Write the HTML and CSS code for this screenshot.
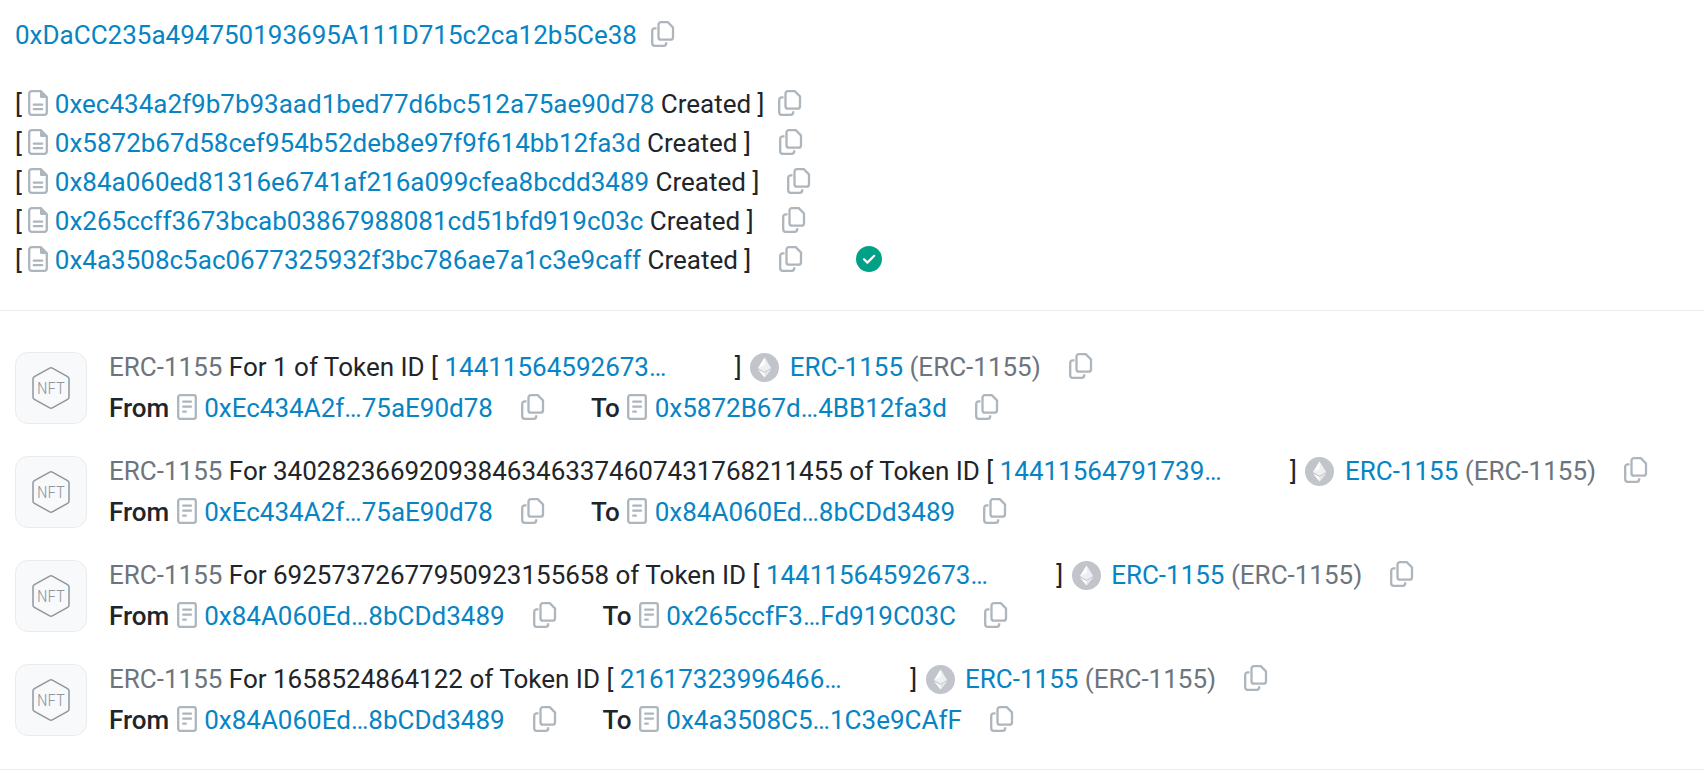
FILE: index.html
```
<!DOCTYPE html>
<html lang="en">
<head>
<meta charset="utf-8">
<title>Transaction details</title>
<link rel="stylesheet" href="styles.css">
</head>
<body>
<svg class="defs" aria-hidden="true">
  <symbol id="copy" viewBox="0 0 24 26"><path d="M10 1.200h6.800l5.200 5.200v9.800a2.500 2.500 0 0 1-2.500 2.500H10a2.500 2.500 0 0 1-2.500-2.500V3.700a2.500 2.500 0 0 1 2.500-2.500zM5.500 7.300H3.700A2.500 2.500 0 0 0 1.200 9.800v12.500a2.500 2.500 0 0 0 2.500 2.500h9a2.500 2.500 0 0 0 2.500-2.500v-1" fill="none" stroke="currentColor" stroke-width="2.300"/></symbol>
  <symbol id="file" viewBox="0 0 20 26"><path d="M3.700 1.200h9.100l6 6v15.100a2.500 2.500 0 0 1-2.500 2.500H3.700a2.500 2.500 0 0 1-2.500-2.500V3.700a2.500 2.500 0 0 1 2.500-2.500zM5.800 14.700h8.400M5.800 19.200h8.400" fill="none" stroke="currentColor" stroke-width="2.300" stroke-linecap="round"/><path d="M12 1l7 7h-5.500A1.500 1.500 0 0 1 12 6.500z" fill="currentColor"/></symbol>
  <symbol id="note" viewBox="0 0 20 26"><path d="M3.200 1.200h13.600a2 2 0 0 1 2 2v19.600a2 2 0 0 1-2 2H3.200a2 2 0 0 1-2-2V3.200a2 2 0 0 1 2-2zM6.200 7.700h7.800M6.200 12.700h7.800M6.200 17.700h2.600" fill="none" stroke="currentColor" stroke-width="2.300" stroke-linecap="round"/></symbol>
  <symbol id="eth" viewBox="0 0 29 29"><circle cx="14.500" cy="14.500" r="14.500" fill="#c1c5cb"/><path d="M14.500 4.500L8 15l6.500 3.800L21 15z" fill="#fff"/><path d="M14.500 4.500V18.800L21 15zM14.500 12L8 15l6.500 3.800L21 15z" fill="#dfe2e5" opacity=".55"/><path d="M8 16.400l6.500 8.100 6.500-8.100-6.500 3.700z" fill="#fff"/><path d="M14.500 20.100v4.400l6.500-8.100z" fill="#e4e6e9"/></symbol>
  <symbol id="hex" viewBox="0 0 38 42"><path d="M17.700 1.200Q19 .5 20.300 1.200L35.600 9.600Q37 10.500 37 12V30Q37 31.500 35.600 32.400L20.300 40.800Q19 41.500 17.700 40.800L2.400 32.400Q1 31.500 1 30V12Q1 10.500 2.400 9.600Z" fill="none" stroke="currentColor" stroke-width="1.500"/></symbol>
</svg>

<main>
  <section class="receiver">
    <p class="line owner"><a href="#">0xDaCC235a494750193695A111D715c2ca12b5Ce38</a><button class="copy near" aria-label="Copy address"><svg><use href="#copy"/></svg></button></p>
    <p class="line">[ <svg class="doc"><use href="#file"/></svg> <a href="#">0xec434a2f9b7b93aad1bed77d6bc512a75ae90d78</a> Created ]<button class="copy near" aria-label="Copy address"><svg><use href="#copy"/></svg></button></p>
    <p class="line">[ <svg class="doc"><use href="#file"/></svg> <a href="#">0x5872b67d58cef954b52deb8e97f9f614bb12fa3d</a> Created ]<button class="copy" aria-label="Copy address"><svg><use href="#copy"/></svg></button></p>
    <p class="line">[ <svg class="doc"><use href="#file"/></svg> <a href="#">0x84a060ed81316e6741af216a099cfea8bcdd3489</a> Created ]<button class="copy" aria-label="Copy address"><svg><use href="#copy"/></svg></button></p>
    <p class="line">[ <svg class="doc"><use href="#file"/></svg> <a href="#">0x265ccff3673bcab03867988081cd51bfd919c03c</a> Created ]<button class="copy" aria-label="Copy address"><svg><use href="#copy"/></svg></button></p>
    <p class="line">[ <svg class="doc"><use href="#file"/></svg> <a href="#">0x4a3508c5ac0677325932f3bc786ae7a1c3e9caff</a> Created ]<button class="copy" aria-label="Copy address"><svg><use href="#copy"/></svg></button><svg class="check" viewBox="0 0 26 26" role="img" aria-label="Success"><circle cx="13" cy="13" r="13" fill="#00a186"/><path d="M8 13.300l3.400 3.300 6.800-6.800" fill="none" stroke="#fff" stroke-width="2.200" stroke-linecap="round" stroke-linejoin="round"/></svg></p>
  </section>

  <section class="transfers">
    <article class="transfer">
      <div class="tile"><svg><use href="#hex"/></svg><span>NFT</span></div>
      <div class="info">
        <p class="line"><span class="muted">ERC-1155</span> For 1 of Token ID [ <a class="token" href="#">14411564592673…</a> ] <svg class="eth"><use href="#eth"/></svg> <a href="#">ERC-1155</a> <span class="muted">(ERC-1155)</span><button class="copy" aria-label="Copy token"><svg><use href="#copy"/></svg></button></p>
        <p class="line"><b>From</b> <svg class="doc"><use href="#note"/></svg> <a href="#">0xEc434A2f…75aE90d78</a><button class="copy" aria-label="Copy sender"><svg><use href="#copy"/></svg></button><b class="to">To</b> <svg class="doc"><use href="#note"/></svg> <a href="#">0x5872B67d…4BB12fa3d</a><button class="copy" aria-label="Copy recipient"><svg><use href="#copy"/></svg></button></p>
      </div>
    </article>
    <article class="transfer">
      <div class="tile"><svg><use href="#hex"/></svg><span>NFT</span></div>
      <div class="info">
        <p class="line"><span class="muted">ERC-1155</span> For 340282366920938463463374607431768211455 of Token ID [ <a class="token" href="#">14411564791739…</a> ] <svg class="eth"><use href="#eth"/></svg> <a href="#">ERC-1155</a> <span class="muted">(ERC-1155)</span><button class="copy" aria-label="Copy token"><svg><use href="#copy"/></svg></button></p>
        <p class="line"><b>From</b> <svg class="doc"><use href="#note"/></svg> <a href="#">0xEc434A2f…75aE90d78</a><button class="copy" aria-label="Copy sender"><svg><use href="#copy"/></svg></button><b class="to">To</b> <svg class="doc"><use href="#note"/></svg> <a href="#">0x84A060Ed…8bCDd3489</a><button class="copy" aria-label="Copy recipient"><svg><use href="#copy"/></svg></button></p>
      </div>
    </article>
    <article class="transfer">
      <div class="tile"><svg><use href="#hex"/></svg><span>NFT</span></div>
      <div class="info">
        <p class="line"><span class="muted">ERC-1155</span> For 69257372677950923155658 of Token ID [ <a class="token" href="#">14411564592673…</a> ] <svg class="eth"><use href="#eth"/></svg> <a href="#">ERC-1155</a> <span class="muted">(ERC-1155)</span><button class="copy" aria-label="Copy token"><svg><use href="#copy"/></svg></button></p>
        <p class="line"><b>From</b> <svg class="doc"><use href="#note"/></svg> <a href="#">0x84A060Ed…8bCDd3489</a><button class="copy" aria-label="Copy sender"><svg><use href="#copy"/></svg></button><b class="to">To</b> <svg class="doc"><use href="#note"/></svg> <a href="#">0x265ccfF3…Fd919C03C</a><button class="copy" aria-label="Copy recipient"><svg><use href="#copy"/></svg></button></p>
      </div>
    </article>
    <article class="transfer">
      <div class="tile"><svg><use href="#hex"/></svg><span>NFT</span></div>
      <div class="info">
        <p class="line"><span class="muted">ERC-1155</span> For 1658524864122 of Token ID [ <a class="token" href="#">21617323996466…</a> ] <svg class="eth"><use href="#eth"/></svg> <a href="#">ERC-1155</a> <span class="muted">(ERC-1155)</span><button class="copy" aria-label="Copy token"><svg><use href="#copy"/></svg></button></p>
        <p class="line"><b>From</b> <svg class="doc"><use href="#note"/></svg> <a href="#">0x84A060Ed…8bCDd3489</a><button class="copy" aria-label="Copy sender"><svg><use href="#copy"/></svg></button><b class="to">To</b> <svg class="doc"><use href="#note"/></svg> <a href="#">0x4a3508C5…1C3e9CAfF</a><button class="copy" aria-label="Copy recipient"><svg><use href="#copy"/></svg></button></p>
      </div>
    </article>
  </section>
</main>
</body>
</html>
```
FILE: styles.css
```
* { box-sizing: border-box; }
body {
  margin: 0;
  background: #fff;
  color: #212529;
  font: 26px/39px Roboto, "Liberation Sans", sans-serif;
}
.defs { position: absolute; width: 0; height: 0; }
a { color: #0784c3; text-decoration: none; }
b { font-weight: 500; }
.muted { color: #6c757d; }
.line { margin: 0; height: 39px; white-space: nowrap; }
.receiver {
  padding: 16px 15px 30px;
  border-bottom: 1px solid #e9ecef;
}
.owner { margin-bottom: 30px; }
.doc {
  width: 20px;
  height: 26px;
  vertical-align: -3px;
  color: #adb5bd;
}
.copy {
  display: inline-block;
  width: 24px;
  height: 26px;
  margin: 0 0 0 28px;
  padding: 0;
  border: 0;
  background: none;
  color: #adb5bd;
  vertical-align: -3px;
  cursor: pointer;
}
.copy svg { display: block; width: 24px; height: 26px; }
.copy.near { margin-left: 14px; }
.check {
  width: 26px;
  height: 26px;
  margin-left: 53px;
  vertical-align: -3px;
}
.transfers {
  display: flex;
  flex-direction: column;
  gap: 24px;
  padding: 37px 15px 29px;
  border-bottom: 1px solid #e9ecef;
}
.transfer { display: flex; align-items: center; gap: 22px; }
.tile {
  display: grid;
  place-items: center;
  flex: none;
  width: 72px;
  height: 72px;
  border: 1px solid #e9ecef;
  border-radius: 13px;
  background: #f8f9fb;
  color: #90969d;
}
.tile > * { grid-area: 1 / 1; }
.tile svg { width: 38px; height: 42px; }
.tile span { font: 300 17px/24px "Roboto Condensed", Roboto, sans-serif; }
.info { display: grid; gap: 2px; }
.info .doc { margin: 0 1px; }
.token { display: inline-block; width: 284px; }
.eth { width: 29px; height: 29px; margin: 0 4px 0 2px; vertical-align: -6px; }
.to { margin-left: 46px; }
```
